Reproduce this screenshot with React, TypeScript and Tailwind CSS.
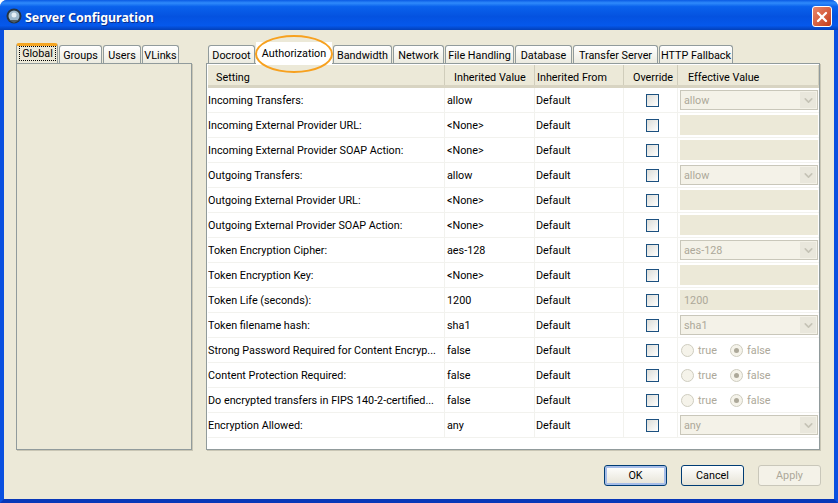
import { ChevronDown, X } from 'lucide-react';

type Effective =
    | { kind: 'select'; value: string }
    | { kind: 'input'; value?: string }
    | { kind: 'radio' };

type Row = {
    setting: string;
    inherited: string;
    effective: Effective;
};

const rows: Row[] = [
    { setting: 'Incoming Transfers:', inherited: 'allow', effective: { kind: 'select', value: 'allow' } },
    { setting: 'Incoming External Provider URL:', inherited: '<None>', effective: { kind: 'input' } },
    { setting: 'Incoming External Provider SOAP Action:', inherited: '<None>', effective: { kind: 'input' } },
    { setting: 'Outgoing Transfers:', inherited: 'allow', effective: { kind: 'select', value: 'allow' } },
    { setting: 'Outgoing External Provider URL:', inherited: '<None>', effective: { kind: 'input' } },
    { setting: 'Outgoing External Provider SOAP Action:', inherited: '<None>', effective: { kind: 'input' } },
    { setting: 'Token Encryption Cipher:', inherited: 'aes-128', effective: { kind: 'select', value: 'aes-128' } },
    { setting: 'Token Encryption Key:', inherited: '<None>', effective: { kind: 'input' } },
    { setting: 'Token Life (seconds):', inherited: '1200', effective: { kind: 'input', value: '1200' } },
    { setting: 'Token filename hash:', inherited: 'sha1', effective: { kind: 'select', value: 'sha1' } },
    { setting: 'Strong Password Required for Content Encryp...', inherited: 'false', effective: { kind: 'radio' } },
    { setting: 'Content Protection Required:', inherited: 'false', effective: { kind: 'radio' } },
    { setting: 'Do encrypted transfers in FIPS 140-2-certified...', inherited: 'false', effective: { kind: 'radio' } },
    { setting: 'Encryption Allowed:', inherited: 'any', effective: { kind: 'select', value: 'any' } },
];

const leftTabs = [
    { label: 'Groups', width: 'w-[43px]' },
    { label: 'Users', width: 'w-[38px]' },
    { label: 'VLinks', width: 'w-[37px]' },
];

const rightTabsAfter = [
    { label: 'Bandwidth', width: 'w-[59px]' },
    { label: 'Network', width: 'w-[51px]' },
    { label: 'File Handling', width: 'w-[69px]' },
    { label: 'Database', width: 'w-[57px]' },
    { label: 'Transfer Server', width: 'w-[85px]' },
    { label: 'HTTP Fallback', width: 'w-[74px]' },
];

const Tab = ({ label, width }: { label: string; width: string }) => (
    <div
        className={`${width} flex h-[18px] shrink-0 items-center justify-center rounded-t-[3px] border border-b-0 border-[#919b9c] bg-gradient-to-b from-white to-[#ecebe0] pt-[3px] whitespace-nowrap`}
    >
        {label}
    </div>
);

const Radio = ({ label, checked, width }: { label: string; checked?: boolean; width: string }) => (
    <div className={`${width} flex items-center gap-[4px] text-[#aca899]`}>
        <div className="flex h-[13px] w-[13px] items-center justify-center rounded-full border border-[#cfcdc0] bg-[#f5f3ea]">
            {checked && <div className="h-[5px] w-[5px] rounded-full bg-[#aca899]" />}
        </div>
        <span className="pt-[2px]">{label}</span>
    </div>
);

const EffectiveCell = ({ effective }: { effective: Effective }) => {
    if (effective.kind === 'select') {
        return (
            <div className="flex h-[20px] w-[138px] items-center justify-between border border-[#c9c7ba] bg-[#f4f2e8] pl-[3px] text-[#aca899]">
                <span className="pt-[2px]">{effective.value}</span>
                <div className="mr-px flex h-[16px] w-[16px] items-center justify-center bg-[#e9e7dc]">
                    <ChevronDown size={13} strokeWidth={3} color="#c5c3b6" />
                </div>
            </div>
        );
    }
    if (effective.kind === 'input') {
        return (
            <div className="flex h-[20px] w-[138px] items-center bg-[#ece9d8] pt-[2px] pl-[4px] text-[#aca899]">
                {effective.value}
            </div>
        );
    }
    return (
        <div className="flex pl-[1px]">
            <Radio label="true" width="w-[49px]" />
            <Radio label="false" checked width="w-[60px]" />
        </div>
    );
};

const SettingRow = ({ row }: { row: Row }) => (
    <div className="grid h-[25px] grid-cols-[237px_90px_89px_54px_141px] border-b border-[#f2f2ee] text-black">
        <div className="flex items-center overflow-hidden border-r border-[#f2f2ee] pt-[2px] whitespace-nowrap">
            {row.setting}
        </div>
        <div className="flex items-center border-r border-[#f2f2ee] pt-[2px] pl-[2px]">{row.inherited}</div>
        <div className="flex items-center border-r border-[#f2f2ee] pt-[2px] pl-px">Default</div>
        <div className="flex items-center border-r border-[#f2f2ee] pl-[22px]">
            <div className="h-[13px] w-[13px] border border-[#1c5180] bg-gradient-to-br from-[#dcdcd7] to-white" />
        </div>
        <div className="flex items-center pl-[2px]">
            <EffectiveCell effective={row.effective} />
        </div>
    </div>
);

const HeaderCell = ({ label, className }: { label: string; className: string }) => (
    <div className={`flex h-[20px] items-center border-r border-[#d0cdbb] pt-[6px] whitespace-nowrap ${className}`}>
        {label}
    </div>
);

const FooterButton = ({ label, tone }: { label: string; tone: 'default' | 'normal' | 'disabled' }) => {
    if (tone === 'disabled') {
        return (
            <button className="h-[21px] w-[63px] rounded-[3px] border border-[#c9c7ba] bg-[#f4f2e8] pt-px text-[#aca899]">
                {label}
            </button>
        );
    }
    return (
        <button
            className={`h-[21px] w-[63px] rounded-[3px] border border-[#003c74] bg-gradient-to-b from-white to-[#e6e3d6] pt-px ${
                tone === 'default' ? 'shadow-[inset_0_0_0_2px_#a6bde8]' : ''
            }`}
        >
            {label}
        </button>
    );
};

export default function App() {
    return (
        <div className="flex h-[503px] w-[838px] flex-col overflow-hidden rounded-t-[7px] bg-[#0a50e0] font-['Roboto',sans-serif] text-[10.8px] text-black">
            {/* title bar */}
            <div className="flex h-[30px] shrink-0 items-center justify-between bg-[linear-gradient(180deg,#0a5ae4_0%,#2f8bfb_10%,#0a62ec_22%,#0452e0_55%,#0558ec_85%,#0340b8_100%)] pt-[3px] pr-[6px] pl-[6px]">
                <div className="flex items-center gap-[3px]">
                    <svg width="16" height="16" viewBox="0 0 16 16">
                        <circle cx="8" cy="8" r="7.5" fill="#27343f" />
                        <circle cx="8" cy="8" r="5.5" fill="#9db8cc" />
                        <circle cx="8" cy="7" r="2.5" fill="#e4eef5" />
                        <path d="M3 12 L13 12 L8 15 Z" fill="#4b5a66" />
                    </svg>
                    <span className="pt-[3px] font-['Noto_Sans',sans-serif] text-[12.4px] font-bold text-white [text-shadow:1px_1px_0_#0b2f8a]">
                        Server Configuration
                    </span>
                </div>
                <div className="flex h-[21px] w-[20px] items-center justify-center rounded-[3px] border border-white bg-gradient-to-br from-[#e9866a] to-[#c43a12]">
                    <X size={16} strokeWidth={3.5} color="white" />
                </div>
            </div>

            {/* dialog body */}
            <div className="flex min-h-0 flex-1 flex-col border-x-[4px] border-b-[4px] border-x-[#0a50e0] border-b-[#0838b8] bg-[#ece9d8] px-[12px]">
                <div className="flex gap-[14px] pt-[14px]">
                    <div className="flex w-[176px] flex-col">
                        <div className="flex h-[19px] items-end gap-px">
                            <div className="flex h-[20px] w-[42px] items-start justify-center rounded-t-[3px] border-x border-[#919b9c] border-t-[3px] border-t-[#f5a623] bg-[#ece9d8] pl-px">
                                <span className="border border-dotted border-black px-[2px] leading-[13px]">Global</span>
                            </div>
                            {leftTabs.map((tab) => (
                                <Tab key={tab.label} label={tab.label} width={tab.width} />
                            ))}
                        </div>
                        <div className="h-[387px] border border-[#919b9c] bg-[#ece9d8] shadow-[1px_1px_0_#c9c6b5]" />
                    </div>

                    <div className="flex w-[614px] flex-col">
                        <div className="flex h-[19px] items-end gap-px pl-[2px]">
                            <Tab label="Docroot" width="w-[47px]" />
                            <div className="relative z-10 mb-[-1px] flex h-[22px] w-[76px] shrink-0 items-start justify-center bg-white pt-[4px]">
                                Authorization
                                <div className="absolute top-[-7px] left-[-1px] h-[38px] w-[78px] rounded-[50%] border-2 border-[#f7a11f]" />
                            </div>
                            {rightTabsAfter.map((tab) => (
                                <Tab key={tab.label} label={tab.label} width={tab.width} />
                            ))}
                        </div>
                        <div className="h-[387px] border border-[#919b9c] bg-white pt-px pl-px shadow-[1px_1px_0_#c9c6b5]">
                            <div className="grid h-[23px] grid-cols-[237px_90px_89px_54px_141px] border-b-[3px] border-[#d8d4c2] bg-[#ece9d8]">
                                <HeaderCell label="Setting" className="pl-[8px]" />
                                <HeaderCell label="Inherited Value" className="pl-[9px]" />
                                <HeaderCell label="Inherited From" className="pl-[2px]" />
                                <HeaderCell label="Override" className="pl-[9px]" />
                                <HeaderCell label="Effective Value" className="pl-[10px]" />
                            </div>
                            {rows.map((row) => (
                                <SettingRow key={row.setting} row={row} />
                            ))}
                        </div>
                    </div>
                </div>

                <div className="flex justify-end gap-[14px] pt-[15px] pr-px">
                    <FooterButton label="OK" tone="default" />
                    <FooterButton label="Cancel" tone="normal" />
                    <FooterButton label="Apply" tone="disabled" />
                </div>
            </div>
        </div>
    );
}
